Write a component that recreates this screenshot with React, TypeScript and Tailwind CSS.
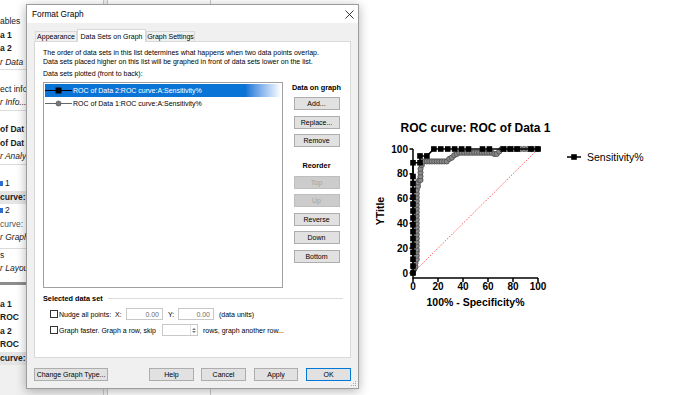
import type { ReactNode } from "react";

const sans = "font-['Liberation_Sans',Arial,sans-serif]";

// ---- chart data (percent units) ----
const blackPts: [number, number][] = [
  [0, 0], [0, 5.6], [0, 11.1], [0, 16.7], [0, 22.2], [0, 27.8], [0, 33.3], [0, 38.9],
  [0, 44.4], [0, 50], [0, 55.6], [0, 61.1], [0, 66.7], [0, 72.2], [0, 77.8], [0, 88.9],
  [5.6, 88.9], [5.6, 94.4], [11.1, 94.4], [16.7, 100], [22.2, 100], [27.8, 100], [33.3, 100],
  [38.9, 100], [44.4, 100], [55.6, 100], [61.1, 100], [72.2, 100], [77.8, 100], [83.3, 100],
  [94.4, 100], [100, 100],
];

const grayPts: [number, number][] = [
  [0, 0], [1, 3], [2, 5], [2, 8], [3, 11], [3, 14], [3, 17], [3, 19], [3, 22], [3, 25],
  [3, 28], [3, 31], [3, 34], [3, 37], [3, 40], [3, 43], [3, 46], [3, 49], [3, 52], [3, 55],
  [3, 58], [3, 61], [3, 64], [3, 67], [4, 70], [4, 73], [5, 75], [6, 75], [6, 78], [6, 81],
  [6, 84], [7, 87], [7, 90], [9, 90], [11, 90], [13, 90], [15, 90], [17, 90], [19, 90],
  [21, 90], [23, 90], [25, 90], [27, 90], [29, 92], [31, 93], [33, 95], [35, 96], [37, 97],
  [39, 97], [41, 97], [43, 97], [45, 97], [47, 97], [49, 97], [51, 97], [53, 97], [55, 97],
  [57, 97], [59, 97], [61, 97], [63, 97], [65, 96], [67, 96], [69, 98], [71, 100], [74, 100],
  [77, 100], [80, 100], [83, 100], [86, 100], [89, 100], [92, 100], [95, 100], [98, 100],
  [100, 100],
];

const sx = (v: number) => 43 + v * 1.25;
const sy = (v: number) => 163 - v * 1.24;
const toPath = (pts: [number, number][]) =>
  pts.map(([x, y], i) => `${i ? "L" : "M"}${sx(x).toFixed(1)} ${sy(y).toFixed(1)}`).join(" ");

function RocChart() {
  const ticks = [0, 20, 40, 60, 80, 100];
  return (
    <svg width="310" height="210" viewBox="0 0 310 210" className={sans}>
      <text x="105.5" y="22" textAnchor="middle" fontSize="12" fontWeight="700">
        ROC curve: ROC of Data 1
      </text>

      {/* axes */}
      <path d="M43 39 V168 H168" fill="none" stroke="#000" strokeWidth="1.5" />
      {ticks.map((t) => (
        <g key={t}>
          <line x1="39.5" x2="43" y1={sy(t)} y2={sy(t)} stroke="#000" strokeWidth="1.5" />
          <text x="38" y={sy(t) + 3.6} textAnchor="end" fontSize="10" fontWeight="700">
            {t}
          </text>
          <line x1={sx(t)} x2={sx(t)} y1="168" y2="172" stroke="#000" strokeWidth="1.5" />
          <text x={sx(t)} y="179.5" textAnchor="middle" fontSize="10" fontWeight="700">
            {t}
          </text>
        </g>
      ))}
      <text x="105.5" y="196" textAnchor="middle" fontSize="10.5" fontWeight="700">
        100% - Specificity%
      </text>
      <text
        x="0"
        y="0"
        transform="translate(14 101) rotate(-90)"
        textAnchor="middle"
        fontSize="10.5"
        fontWeight="700"
      >
        YTitle
      </text>

      {/* chance line */}
      <line x1={sx(0)} y1={sy(0)} x2={sx(100)} y2={sy(100)} stroke="#ff5a5a" strokeWidth="1" strokeDasharray="1.5 1.5" />

      {/* Data 1 */}
      <path d={toPath(grayPts)} fill="none" stroke="#555" strokeWidth="1.2" />
      {grayPts.map(([x, y], i) => (
        <circle key={i} cx={sx(x)} cy={sy(y)} r="2.6" fill="#8a8a8a" stroke="#4a4a4a" strokeWidth="0.8" />
      ))}

      {/* Data 2 */}
      <path d={toPath(blackPts)} fill="none" stroke="#000" strokeWidth="1.5" />
      {blackPts.map(([x, y], i) => (
        <rect key={i} x={sx(x) - 2.8} y={sy(y) - 2.8} width="5.6" height="5.6" fill="#000" />
      ))}

      {/* legend */}
      <line x1="197" x2="211" y1="47" y2="47" stroke="#000" strokeWidth="1.5" />
      <rect x="201.2" y="44.2" width="5.6" height="5.6" fill="#000" />
      <text x="217" y="51" fontSize="10.5">
        Sensitivity%
      </text>
    </svg>
  );
}

// ---- left tree (mostly hidden under the dialog) ----
function TreeRow({ children, className = "" }: { children?: ReactNode; className?: string }) {
  return <div className={`flex h-[13.5px] items-center whitespace-nowrap ${className}`}>{children}</div>;
}

function TreeSep() {
  return <TreeRow className="border-t border-[#dcdcdc]" />;
}

function Sidebar() {
  return (
    <div className="flex h-full w-[104px] flex-col overflow-hidden border-r border-[#c8c8c8] bg-[#f0f0f0] text-[8.5px] text-[#1a1a1a]">
      <div className="flex flex-col bg-white pt-[15px]">
        <TreeRow>ables</TreeRow>
        <TreeRow className="font-bold">a 1</TreeRow>
        <TreeRow className="font-bold">a 2</TreeRow>
        <TreeRow className="italic">r Data T</TreeRow>
        <TreeSep />
        <TreeRow>ect info</TreeRow>
        <TreeRow className="italic">r Info...</TreeRow>
        <TreeSep />
        <TreeRow className="font-bold">of Dat</TreeRow>
        <TreeRow className="font-bold">of Dat</TreeRow>
        <TreeRow className="italic">r Analys</TreeRow>
        <TreeSep />
        <TreeRow>
          <span className="mr-[2px] h-[5px] w-[3px] bg-[#2d6fd0]" />1
        </TreeRow>
        <TreeRow className="bg-[#e5e5e5] font-bold">curve:</TreeRow>
        <TreeRow>
          <span className="mr-[2px] h-[5px] w-[3px] bg-[#2d6fd0]" />2
        </TreeRow>
        <TreeRow className="text-[#555]">curve:</TreeRow>
        <TreeRow className="italic">r Graph</TreeRow>
        <div className="h-[4px] border-b border-[#dcdcdc]" />
        <TreeRow>s</TreeRow>
        <TreeRow className="italic">r Layout</TreeRow>
        <div className="h-[6px]" />
        <div className="h-[3px] bg-[#8c8c8c]" />
        <div className="h-[13px]" />
        <TreeRow className="font-bold">a 1</TreeRow>
        <TreeRow className="font-bold">ROC</TreeRow>
        <TreeRow className="font-bold">a 2</TreeRow>
        <TreeRow className="font-bold">ROC</TreeRow>
        <TreeRow className="bg-[#e5e5e5] font-bold">curve:</TreeRow>
      </div>
    </div>
  );
}

// ---- dialog ----
function WinButton({
  label,
  disabled = false,
  primary = false,
  className = "",
}: {
  label: string;
  disabled?: boolean;
  primary?: boolean;
  className?: string;
}) {
  const tone = disabled
    ? "border-[#bfbfbf] bg-[#cccccc] text-[#a3a3a3]"
    : primary
      ? "border-[#0078d7] bg-[#e1e1e1] text-black"
      : "border-[#adadad] bg-[#e1e1e1] text-black";
  return (
    <button type="button" className={`flex h-[13px] items-center justify-center border text-[7px] leading-none ${tone} ${className}`}>
      {label}
    </button>
  );
}

function Checkbox() {
  return <span className="h-[8px] w-[8px] shrink-0 border border-[#333] bg-white" />;
}

function ListRow({ selected = false, marker, text }: { selected?: boolean; marker: "square" | "circle"; text: string }) {
  return (
    <div
      className={`flex h-[13px] items-center ${
        selected ? "bg-gradient-to-r from-[#0a74d6] via-[#0a74d6] via-85% to-white text-white" : "text-black"
      }`}
    >
      <svg width="27" height="9" viewBox="0 0 27 9" className="shrink-0">
        {marker === "square" ? (
          <>
            <line x1="0" x2="27" y1="4.5" y2="4.5" stroke="#000" strokeWidth="1" />
            <rect x="10.5" y="1.5" width="6" height="6" fill="#000" />
          </>
        ) : (
          <>
            <line x1="0" x2="27" y1="4.5" y2="4.5" stroke="#666" strokeWidth="1" />
            <circle cx="13.5" cy="4.5" r="2.6" fill="#777" stroke="#555" strokeWidth="0.6" />
          </>
        )}
      </svg>
      <span className="ml-[1px] whitespace-nowrap">{text}</span>
    </div>
  );
}

function NumBox({ value, w }: { value: string; w: string }) {
  return (
    <span className={`flex h-[12px] items-center justify-end border border-[#c8c8c8] bg-white pr-[3px] text-[#6d6d6d] ${w}`}>
      {value}
    </span>
  );
}

function FormatGraphDialog() {
  return (
    <div className="absolute left-[26px] top-[4px] flex h-[385px] w-[333px] flex-col border border-[#9c9c9c] bg-[#f0f0f0] text-[7px] leading-[9px] text-black shadow-[0_2px_10px_rgba(0,0,0,0.3)]">
      <div className="flex h-[19px] items-center justify-between bg-white pl-[5px] pr-[4px]">
        <span className="text-[8.3px]">Format Graph</span>
        <svg width="9" height="9" viewBox="0 0 9 9">
          <path d="M0.5 0.5 L8.5 8.5 M8.5 0.5 L0.5 8.5" stroke="#222" strokeWidth="0.9" />
        </svg>
      </div>

      <div className="flex flex-1 flex-col pl-[7px] pt-[7px]">
        {/* tabs */}
        <div className="flex h-[11px] items-end pl-[1px]">
          <div className="flex h-[10px] w-[42px] items-center justify-center border border-b-0 border-[#d9d9d9] bg-[#f0f0f0]">
            Appearance
          </div>
          <div className="relative z-10 -mb-px flex h-[13px] w-[69px] items-center justify-center border border-b-0 border-[#d9d9d9] bg-white">
            Data Sets on Graph
          </div>
          <div className="flex h-[10px] w-[49px] items-center justify-center border border-b-0 border-[#d9d9d9] bg-[#f0f0f0]">
            Graph Settings
          </div>
        </div>

        {/* panel */}
        <div className="flex h-[317px] w-[317px] flex-col border border-[#d9d9d9] bg-white pl-[8px] pt-[6px]">
          <p>The order of data sets in this list determines what happens when two data points overlap.</p>
          <p>Data sets placed higher on this list will be graphed in front of data sets lower on the list.</p>
          <p className="mt-[3px]">Data sets plotted (front to back):</p>

          <div className="mt-[4px] flex">
            <div className="h-[206px] w-[240px] border border-[#a0a0a0] p-px">
              <ListRow selected marker="square" text="ROC of Data 2:ROC curve:A:Sensitivity%" />
              <ListRow marker="circle" text="ROC of Data 1:ROC curve:A:Sensitivity%" />
            </div>
            <div className="flex flex-1 flex-col items-center pt-px">
              <p className="text-[7.3px] font-bold">Data on graph</p>
              <div className="mt-[5px] flex flex-col gap-[5.5px]">
                <WinButton label="Add..." className="w-[46px]" />
                <WinButton label="Replace..." className="w-[46px]" />
                <WinButton label="Remove" className="w-[46px]" />
              </div>
              <p className="mt-[14px] text-[7.3px] font-bold">Reorder</p>
              <div className="mt-[5.5px] flex flex-col gap-[5.5px]">
                <WinButton label="Top" disabled className="w-[46px]" />
                <WinButton label="Up" disabled className="w-[46px]" />
                <WinButton label="Reverse" className="w-[46px]" />
                <WinButton label="Down" className="w-[46px]" />
                <WinButton label="Bottom" className="w-[46px]" />
              </div>
            </div>
          </div>

          <div className="mt-[5.5px] flex items-center">
            <span className="text-[7.3px] font-bold">Selected data set</span>
            <span className="ml-[5px] mr-[7px] h-px flex-1 bg-[#dcdcdc]" />
          </div>

          <div className="mt-[5.5px] flex h-[12px] items-center pl-[7px]">
            <Checkbox />
            <span className="ml-[1px] w-[56px]">Nudge all points:</span>
            <span className="w-[11px]">X:</span>
            <NumBox value="0.00" w="w-[37px]" />
            <span className="ml-[5px] w-[10px]">Y:</span>
            <NumBox value="0.00" w="w-[36px]" />
            <span className="ml-[5px]">(data units)</span>
          </div>

          <div className="mt-[4px] flex h-[12px] items-center pl-[7px]">
            <Checkbox />
            <span className="ml-[1px] w-[103px] whitespace-nowrap">Graph faster. Graph a row, skip</span>
            <span className="flex h-[12px] w-[36px] items-stretch justify-end border border-[#c8c8c8] bg-white">
              <span className="flex w-[7px] flex-col items-center justify-center gap-[1px] border-l border-[#e0e0e0]">
                <svg width="4" height="2" viewBox="0 0 4 2">
                  <path d="M0 2 L2 0 L4 2 Z" fill="#777" />
                </svg>
                <svg width="4" height="2" viewBox="0 0 4 2">
                  <path d="M0 0 L2 2 L4 0 Z" fill="#777" />
                </svg>
              </span>
            </span>
            <span className="ml-[5px] whitespace-nowrap">rows, graph another row...</span>
          </div>
        </div>

        {/* bottom buttons */}
        <div className="mt-[10px] flex">
          <WinButton label="Change Graph Type..." className="w-[74px]" />
          <WinButton label="Help" className="ml-[41px] w-[45px]" />
          <WinButton label="Cancel" className="ml-[7px] w-[45px]" />
          <WinButton label="Apply" className="ml-[8px] w-[44px]" />
          <WinButton label="OK" primary className="ml-[8px] w-[45px]" />
        </div>

        <div className="mt-auto flex justify-end pb-[2px] pr-[2px]">
          <svg width="5" height="5" viewBox="0 0 5 5">
            <rect x="4" y="0" width="1" height="1" fill="#aaa" />
            <rect x="2" y="2" width="1" height="1" fill="#aaa" />
            <rect x="4" y="2" width="1" height="1" fill="#aaa" />
            <rect x="0" y="4" width="1" height="1" fill="#aaa" />
            <rect x="2" y="4" width="1" height="1" fill="#aaa" />
            <rect x="4" y="4" width="1" height="1" fill="#aaa" />
          </svg>
        </div>
      </div>
    </div>
  );
}

export default function App() {
  return (
    <div className={`relative h-[395px] w-[680px] overflow-hidden bg-white text-black ${sans}`}>
      <div className="flex h-full">
        <Sidebar />
        <div className="h-full w-[3px] bg-[#f0f0f0]" />
        <div className="h-full w-[104px] border-x border-[#c8c8c8] bg-white" />
        <div className="flex-1 pl-[159px] pt-[110px]">
          <RocChart />
        </div>
      </div>
      <FormatGraphDialog />
    </div>
  );
}
